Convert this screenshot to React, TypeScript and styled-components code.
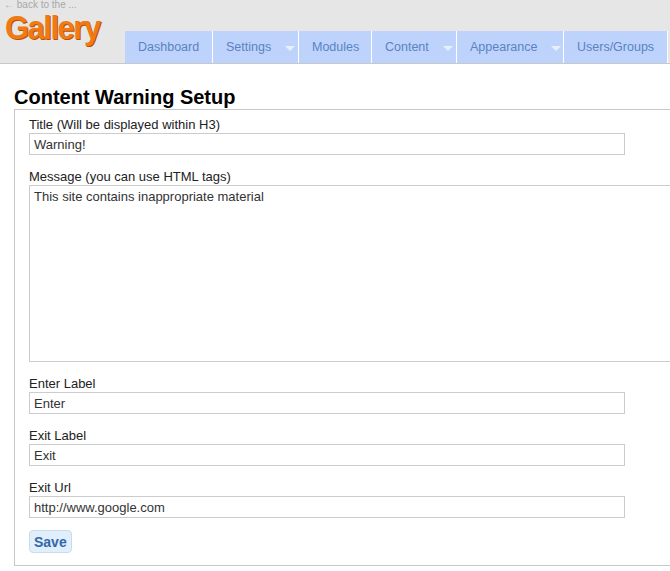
import React from "react";
import styled, { createGlobalStyle } from "styled-components";

const Global = createGlobalStyle`
  body { margin: 0; font-family: Arial, "Liberation Sans", sans-serif; background: #fff; overflow: hidden; }
`;

const Header = styled.div`
  height: 63px; background: #e6e6e6; border-bottom: 1px solid #c8c8c8;
  position: relative; display: flex; align-items: flex-end;
`;
const Back = styled.div`
  position: absolute; left: 4px; top: 0; font-size: 10px; line-height: 10px; color: #a8a8a8;
`;
const Logo = styled.div`
  position: absolute; left: 5px; top: 12px; font-family: "Liberation Sans", Arial, sans-serif;
  font-weight: bold; font-size: 31px; line-height: 32px; letter-spacing: -1.5px; color: #f07a14;
  text-shadow: 1px 1px 0 #b85000; transform: scaleY(1.1);
`;
const Tabs = styled.nav`
  display: flex; margin-left: 125px; height: 32px;
`;
const Tab = styled.div<{ w: number }>`
  width: ${p => p.w}px; box-sizing: border-box; background: #bdd3fb; border-right: 1px solid #fff;
  color: #5b82c4; font-size: 12.5px; display: flex; align-items: center; padding-left: 13px; gap: 14px;
`;
const Caret = styled.span`
  width: 0; height: 0; border-left: 5px solid transparent; border-right: 5px solid transparent;
  border-top: 5px solid #e8f0fd; margin-top: 2px;
`;
const Main = styled.div` padding: 21px 0 0 14px; `;
const H = styled.h3` margin: 0; font-size: 20px; font-weight: bold; color: #000; line-height: 24px; `;
const Box = styled.div`
  border: 1px solid #c8c8c8; border-right: none; padding: 7px 0 12px 14px;
  display: flex; flex-direction: column;
`;
const Label = styled.label` font-size: 13px; color: #222; line-height: 16px; `;
const Input = styled.input`
  width: 596px; height: 22px; box-sizing: border-box; border: 1px solid #ccc; font: 13px Arial, "Liberation Sans", sans-serif;
  padding: 0 4px; color: #333; margin: 0 0 14px;
`;
const Area = styled.textarea`
  width: 660px; height: 177px; box-sizing: border-box; border: 1px solid #ccc; border-right: none; resize: none;
  font: 13px Arial, "Liberation Sans", sans-serif; padding: 3px 4px; color: #333; margin: 0 0 14px; display: block;
`;
const Save = styled.button`
  align-self: flex-start; margin-top: -2px; height: 23px; padding: 0 4px; border: 1px solid #c8dcf0;
  border-radius: 4px; background: #e1eefb; color: #3268a8; font: bold 14px Arial, "Liberation Sans", sans-serif;
`;

const tabs: [string, number, boolean][] = [
  ["Dashboard", 88, false], ["Settings", 86, true], ["Modules", 73, false],
  ["Content", 85, true], ["Appearance", 107, true], ["Users/Groups", 104, false],
];

export default function App() {
  return (
    <>
      <Global />
      <Header>
        <Back>← back to the ...</Back>
        <Logo>Gallery</Logo>
        <Tabs>
          {tabs.map(([t, w, c]) => <Tab key={t} w={w}>{t}{c && <Caret />}</Tab>)}
        </Tabs>
      </Header>
      <Main>
        <H>Content Warning Setup</H>
        <Box>
          <Label>Title (Will be displayed within H3)</Label>
          <Input defaultValue="Warning!" />
          <Label>Message (you can use HTML tags)</Label>
          <Area defaultValue="This site contains inappropriate material" />
          <Label>Enter Label</Label>
          <Input defaultValue="Enter" />
          <Label>Exit Label</Label>
          <Input defaultValue="Exit" />
          <Label>Exit Url</Label>
          <Input defaultValue="http://www.google.com" />
          <Save>Save</Save>
        </Box>
      </Main>
    </>
  );
}
